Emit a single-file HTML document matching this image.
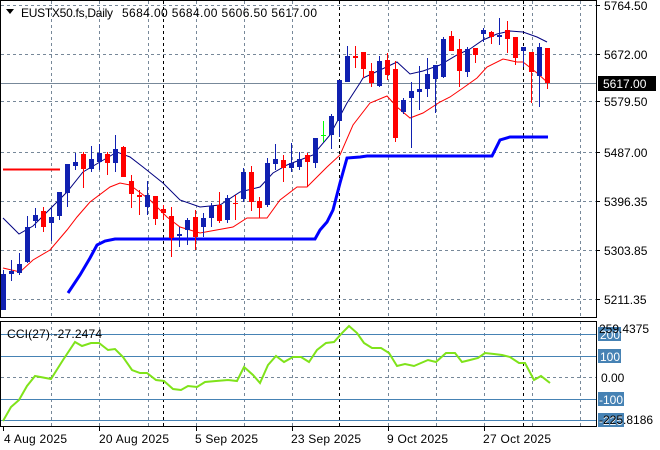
<!DOCTYPE html>
<html><head><meta charset="utf-8"><style>
html,body{margin:0;padding:0;background:#fff;}
svg{display:block;font-family:"Liberation Sans",sans-serif;}
</style></head><body>
<svg width="660" height="450" xmlns="http://www.w3.org/2000/svg">
<rect width="660" height="450" fill="#fff"/>
<g stroke="#778899" stroke-dasharray="3,3" stroke-width="1">
<path d="M51.5 1V317M99.5 1V317M148.5 1V317M196.5 1V317M244.5 1V317M292.5 1V317M388.5 1V317M436.5 1V317M484.5 1V317M532.5 1V317M580.5 1V317"/>
<path d="M1 5.5H596M1 54.5H596M1 101.5H596M1 152.5H596M1 201.5H596M1 250.5H596M1 299.5H596"/>
<path d="M51.5 321V426M99.5 321V426M148.5 321V426M196.5 321V426M244.5 321V426M292.5 321V426M388.5 321V426M436.5 321V426M484.5 321V426M532.5 321V426M580.5 321V426M1 377.5H596"/>
</g>
<g stroke="#000" stroke-dasharray="3,3"><path d="M163.5 1V317M339.5 1V317M523.5 1V317M163.5 321V426M339.5 321V426M523.5 321V426"/></g>
<path d="M1 83.5H596" stroke="#778899" stroke-width="1"/>
<path d="M3 169.5H60" stroke="#ff0000" stroke-width="2"/>
<polyline fill="none" stroke="#0000ff" stroke-width="3" points="68,293 80,275 90,258 97,245 105,241 115,239 315,239 320,230 327,222 333,210 340,183 347,158 360,157 367,156 492,156 500,140 510,137 548,137"/>
<polyline fill="none" stroke="#000080" stroke-width="1" points="3,218 19,234 33,226 67,192 83,172 100,162 117,152 130,157 143,167 163,183 180,200 200,207 220,205 240,192 260,187 273,173 287,165 300,160 313,155 330,135 347,103 360,83 363,78 380,70 397,62 410,74 423,71 440,65 457,55 470,49 483,40 497,34 510,31 523,32 537,37 547,42"/>
<polyline fill="none" stroke="#ff0000" stroke-width="1" points="3,268 20,272 33,260 50,250 67,230 77,217 90,202 110,187 120,183 130,185 150,200 167,217 180,227 200,233 233,227 247,218 267,218 280,200 297,187 307,187 327,167 340,155 353,125 370,103 387,96 397,107 410,118 423,113 440,102 450,97 463,88 477,78 487,67 503,59 517,62 523,62 537,73 547,82"/>
<path stroke="#1020b0" stroke-width="1" d="M3.5 270V310M11.5 260V281M19.5 253V275M27.5 216V263M35.5 208V228M51.5 208V241M59.5 192V220M67.5 164V207M75.5 153V170M91.5 146V172M99.5 144V170M115.5 135V172M147.5 181V215M179.5 227V247M187.5 218V245M203.5 213V237M211.5 203V227M227.5 195V223M243.5 168V202M267.5 158V207M275.5 144V170M291.5 143V172M299.5 152V170M315.5 138V168M331.5 114V149M339.5 80V137M347.5 46V82M379.5 56V87M403.5 98V114M411.5 82V148M419.5 66V110M427.5 58V97M435.5 65V113M443.5 37V78M467.5 47V77M483.5 28V42M499.5 18V45M523.5 47V67M539.5 43V107"/>
<path stroke="#ff0000" stroke-width="1" d="M43.5 207V232M83.5 152V188M107.5 152V175M123.5 146V177M131.5 175V208M139.5 190V215M155.5 196V225M163.5 205V220M171.5 207V257M195.5 210V250M219.5 192V223M235.5 195V220M251.5 166V211M259.5 197V218M283.5 155V182M307.5 153V187M355.5 46V68M363.5 52V78M371.5 63V87M387.5 53V80M395.5 61V142M451.5 31V51M459.5 39V87M475.5 48V63M491.5 31V44M507.5 21V53M515.5 37V65M531.5 52V103M547.5 48V89"/>
<path stroke="#00ff00" stroke-width="1" d="M323.5 121V142M321 135.5H326"/>
<g fill="#1020b0">
<rect x="1" y="274" width="5" height="36"/><rect x="9" y="271" width="5" height="3"/><rect x="17" y="264" width="5" height="9"/><rect x="25" y="227" width="5" height="35"/><rect x="33" y="215" width="5" height="6"/><rect x="49" y="217" width="5" height="6"/><rect x="57" y="192" width="5" height="24"/><rect x="65" y="164" width="5" height="29"/><rect x="73" y="162" width="5" height="4"/><rect x="89" y="159" width="5" height="10"/><rect x="97" y="153" width="5" height="9"/><rect x="113" y="149" width="5" height="14"/><rect x="145" y="195" width="5" height="12"/><rect x="177" y="234" width="5" height="2"/><rect x="185" y="220" width="5" height="10"/><rect x="201" y="218" width="5" height="9"/><rect x="209" y="206" width="5" height="12"/><rect x="225" y="198" width="5" height="22"/><rect x="241" y="172" width="5" height="27"/><rect x="265" y="163" width="5" height="42"/><rect x="273" y="159" width="5" height="5"/><rect x="289" y="163" width="5" height="5"/><rect x="297" y="159" width="5" height="8"/><rect x="313" y="138" width="5" height="25"/><rect x="329" y="116" width="5" height="19"/><rect x="337" y="80" width="5" height="41"/><rect x="345" y="56" width="5" height="26"/><rect x="377" y="61" width="5" height="25"/><rect x="401" y="100" width="5" height="12"/><rect x="409" y="91" width="5" height="7"/><rect x="417" y="89" width="5" height="3"/><rect x="425" y="74" width="5" height="15"/><rect x="433" y="65" width="5" height="14"/><rect x="441" y="39" width="5" height="38"/><rect x="465" y="49" width="5" height="23"/><rect x="481" y="30" width="5" height="4"/><rect x="497" y="35" width="5" height="2"/><rect x="521" y="47" width="5" height="4"/><rect x="537" y="47" width="5" height="29"/>
</g>
<g fill="#ff0000">
<rect x="41" y="211" width="5" height="16"/><rect x="81" y="154" width="5" height="15"/><rect x="105" y="154" width="5" height="9"/><rect x="121" y="147" width="5" height="30"/><rect x="129" y="181" width="5" height="13"/><rect x="137" y="195" width="5" height="2"/><rect x="153" y="196" width="5" height="23"/><rect x="161" y="209" width="5" height="4"/><rect x="169" y="216" width="5" height="22"/><rect x="193" y="217" width="5" height="20"/><rect x="217" y="205" width="5" height="16"/><rect x="233" y="203" width="5" height="1"/><rect x="249" y="172" width="5" height="30"/><rect x="257" y="201" width="5" height="7"/><rect x="281" y="160" width="5" height="8"/><rect x="305" y="155" width="5" height="7"/><rect x="353" y="56" width="5" height="2"/><rect x="361" y="52" width="5" height="17"/><rect x="369" y="71" width="5" height="12"/><rect x="385" y="60" width="5" height="15"/><rect x="393" y="69" width="5" height="69"/><rect x="449" y="36" width="5" height="15"/><rect x="457" y="49" width="5" height="22"/><rect x="473" y="48" width="5" height="7"/><rect x="489" y="32" width="5" height="5"/><rect x="505" y="30" width="5" height="9"/><rect x="513" y="37" width="5" height="21"/><rect x="529" y="52" width="5" height="20"/><rect x="545" y="48" width="5" height="35"/>
</g>
<g stroke="#4682b4" stroke-width="1"><path d="M1 334.5H596M1 356.5H596M1 399.5H596M1 420.5H596"/></g>
<polyline fill="none" stroke="#7fe31a" stroke-width="2" points="3,421 11,407 19,400 27,386 35,376 51,379 63,360 75,342 82,346 91,343 99,343 108,350 115,349 123,357 132,370 140,373 147,373 156,380 164,381 173,389 181,390 188,386 197,387 205,382 216,381 228,380 237,381 244,367 253,375 260,383 268,365 276,356 284,362 293,357 301,357 309,362 317,350 326,343 334,342 342,333 349,326 357,333 364,343 372,348 381,348 389,353 397,366 405,364 414,366 421,363 428,360 436,362 446,353 455,353 462,362 470,360 478,358 485,353 494,354 502,355 510,357 519,363 525,363 534,380 541,376 550,383"/>
<rect x="0.5" y="0.5" width="596" height="317" fill="none" stroke="#000"/>
<rect x="0.5" y="321.5" width="596" height="105" fill="none" stroke="#000"/>
<g stroke="#000"><path d="M596 5.5H600M596 54.5H600M596 101.5H600M596 152.5H600M596 201.5H600M596 250.5H600M596 299.5H600"/>
<path d="M3.5 427V431M99.5 427V431M196.5 427V431M292.5 427V431M388.5 427V431M484.5 427V431"/></g>
<g font-size="12" fill="#000">
<text x="604" y="10">5764.50</text><text x="604" y="59">5672.00</text><text x="604" y="106">5579.50</text><text x="604" y="157">5487.00</text><text x="604" y="206">5396.35</text><text x="604" y="255">5303.85</text><text x="604" y="304">5211.35</text>
</g>
<rect x="598" y="76" width="58" height="15" fill="#000"/>
<text x="603" y="88" font-size="12" fill="#fff">5617.00</text>
<g fill="#4682b4"><rect x="598" y="327" width="23" height="14"/><rect x="598" y="349" width="23" height="14"/><rect x="598" y="392" width="26" height="14"/><rect x="598" y="413" width="26" height="14"/></g>
<g font-size="12" fill="#fff"><text x="600" y="339">200</text><text x="600" y="361">100</text><text x="599" y="404">-100</text><text x="599" y="425">-225</text></g>
<g font-size="12" fill="#000"><text x="599" y="333">259.4375</text><text x="601" y="382">0.00</text><text x="599" y="424">-225.8186</text></g>
<text x="7" y="338" font-size="12" fill="#000" textLength="95">CCI(27) -27.2474</text>
<path d="M6 9H14L10 14Z" fill="#000"/>
<text x="21" y="17" font-size="12" fill="#000" textLength="92">EUSTX50.fs,Daily</text>
<text x="122" y="17" font-size="12" fill="#000" textLength="195">5684.00 5684.00 5606.50 5617.00</text>
<g font-size="12" fill="#000">
<text x="4" y="443" textLength="63">4 Aug 2025</text><text x="99" y="443" textLength="70">20 Aug 2025</text><text x="195" y="443" textLength="63">5 Sep 2025</text><text x="291" y="443" textLength="70">23 Sep 2025</text><text x="387" y="443" textLength="61">9 Oct 2025</text><text x="483" y="443" textLength="68">27 Oct 2025</text>
</g>
</svg>
</body></html>
